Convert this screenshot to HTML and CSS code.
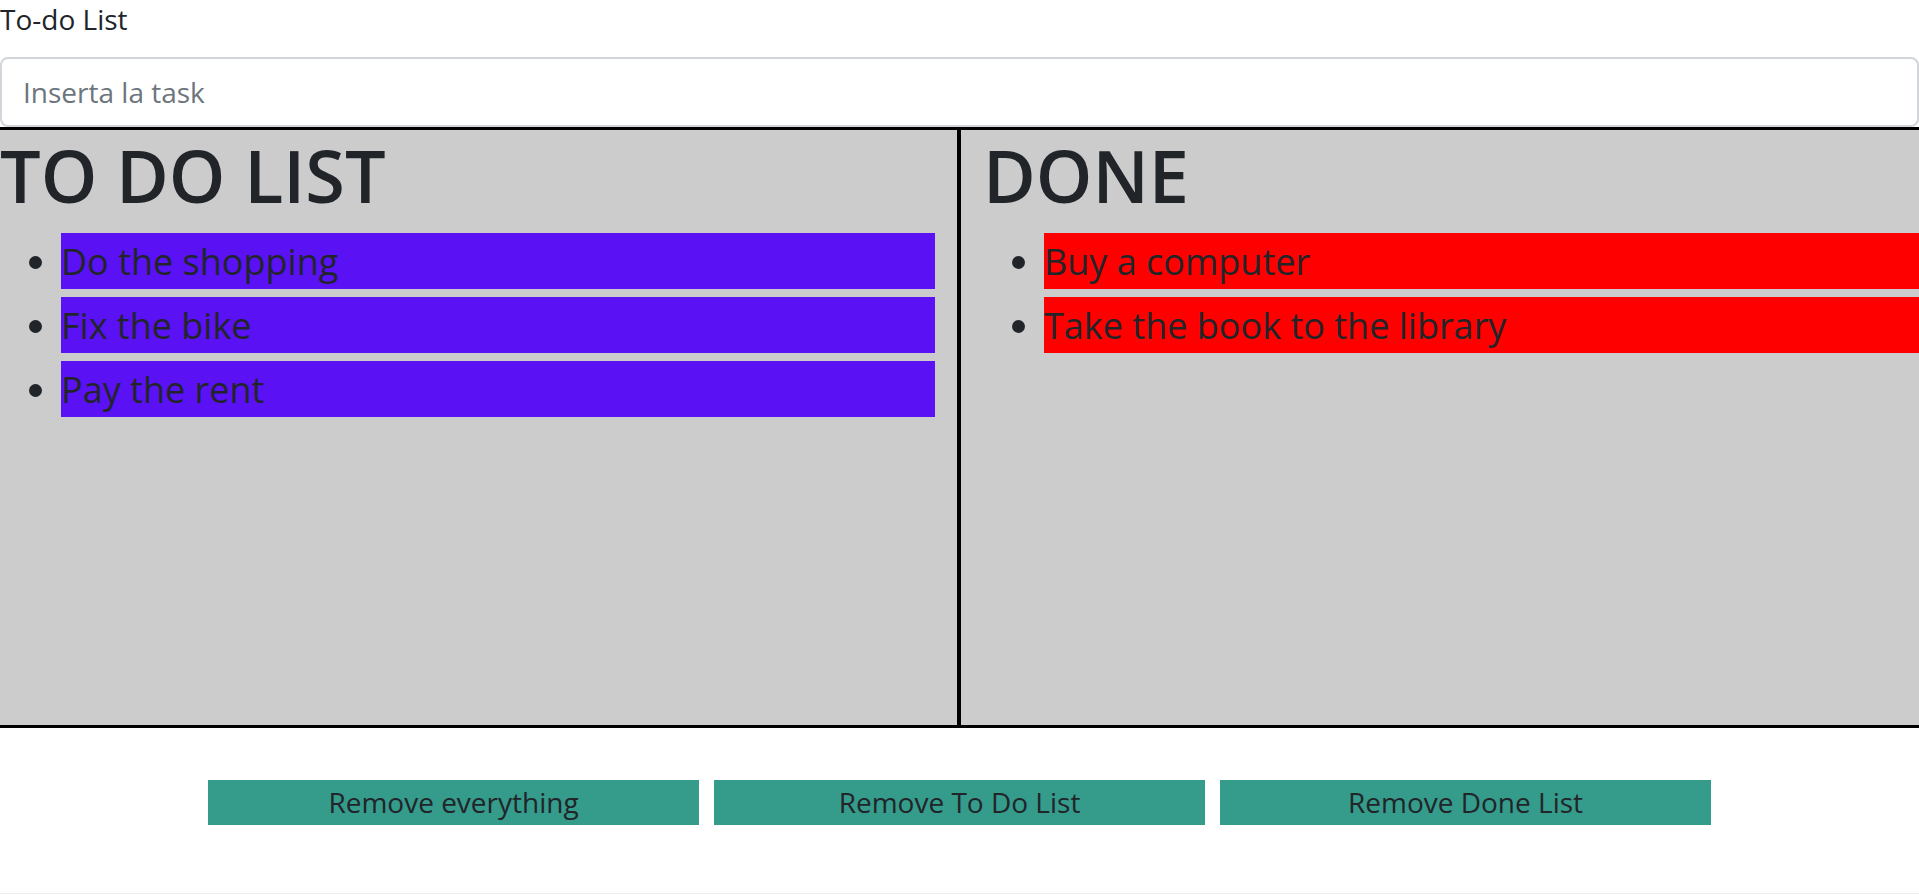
FILE: index.html
```html
<!DOCTYPE html>
<html lang="it">
<head>
<meta charset="utf-8">
<title>To-do List</title>
<link rel="stylesheet" href="styles.css">
</head>
<body>
<div class="app">
  <div class="title">To-do List</div>
  <input class="task-input" type="text" placeholder="Inserta la task">
  <div class="board">
    <section class="col col-todo">
      <h1 class="col-title">TO DO LIST</h1>
      <ul class="list">
        <li class="item item-todo">Do the shopping</li>
        <li class="item item-todo">Fix the bike</li>
        <li class="item item-todo">Pay the rent</li>
      </ul>
    </section>
    <section class="col col-done">
      <h1 class="col-title">DONE</h1>
      <ul class="list">
        <li class="item item-done">Buy a computer</li>
        <li class="item item-done">Take the book to the library</li>
      </ul>
    </section>
  </div>
  <div class="actions">
    <button class="btn" type="button">Remove everything</button>
    <button class="btn" type="button">Remove To Do List</button>
    <button class="btn" type="button">Remove Done List</button>
  </div>
</div>
</body>
</html>
```

FILE: styles.css
```css
* {
  box-sizing: border-box;
}

html, body {
  margin: 0;
  padding: 0;
  background: #ffffff;
}

body {
  font-family: "Open Sans", "Noto Sans", sans-serif;
  color: #212529;
}

.app {
  display: flex;
  flex-direction: column;
}

.title {
  font-size: 28px;
  line-height: 38px;
  margin-bottom: 19px;
}

.task-input {
  display: block;
  width: 100%;
  height: 70px;
  margin: 0;
  padding: 0 21px;
  border: 2px solid #d2d6da;
  border-radius: 8px;
  font-family: inherit;
  font-size: 28px;
  color: #212529;
  background: #ffffff;
  outline: none;
}

.task-input::placeholder {
  color: #6c757d;
}

.board {
  display: grid;
  grid-template-columns: 959px 1fr;
  height: 601px;
  border-top: 3px solid #000000;
  border-bottom: 3px solid #000000;
  background: #cccccc;
}

.col-todo {
  padding-right: 22px;
  border-right: 2px solid #000000;
}

.col-done {
  padding-left: 22px;
  border-left: 2px solid #000000;
}

.col-title {
  margin: 2px 0 0;
  font-size: 72px;
  line-height: 86px;
  font-weight: 600;
}

.list {
  margin: 15px 0 0;
  padding: 0 0 0 61px;
}

.item {
  height: 56px;
  line-height: 57px;
  font-size: 36px;
  margin-bottom: 8px;
  white-space: nowrap;
}

.item-todo {
  background: #5a12f5;
}

.item-done {
  background: #ff0000;
}

.actions {
  display: flex;
  justify-content: center;
  gap: 15px;
  padding: 52px 0 68px;
  border-bottom: 1px solid #ececec;
}

.btn {
  width: 491px;
  height: 45px;
  margin: 0;
  padding: 0;
  border: none;
  background: #359b8b;
  color: #212529;
  font-family: inherit;
  font-size: 28px;
  line-height: 45px;
  cursor: pointer;
}
```
